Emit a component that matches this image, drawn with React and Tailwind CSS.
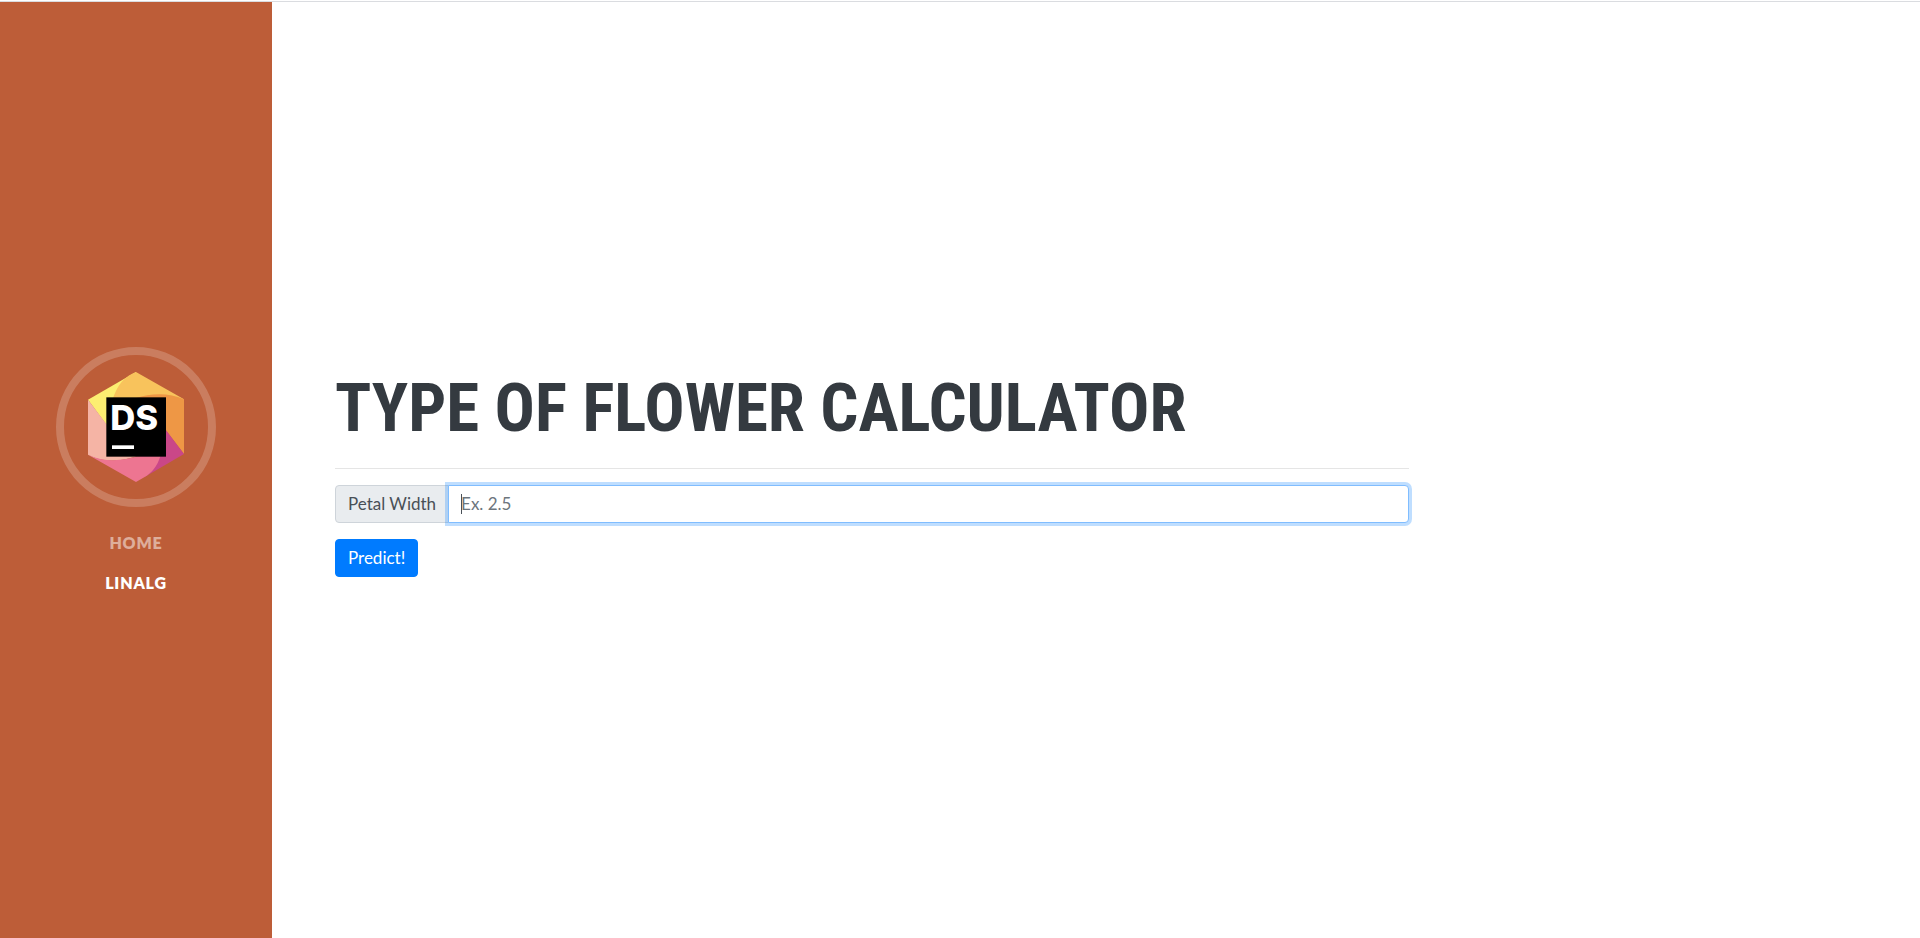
const links = [
  { label: "Home", active: false },
  { label: "LinAlg", active: true },
];

function Logo() {
  return (
    <svg viewBox="144 126 288 330" className="w-24" role="img" aria-label="DataSpell">
      <path d="M288 126 L144 209 L200 285 L290 240 Z" fill="#fcee71" />
      <path d="M144 209 L144 374 C190 400 250 395 300 375 L300 330 L199 282 Z" fill="#f5b4a5" />
      <path d="M288 126 L432 208 L377 280 L200 290 C212 225 222 150 288 126 Z" fill="#f8c35c" />
      <path d="M432 208 L432 372 L377 300 L288 204 C330 190 385 186 432 208 Z" fill="#ee9745" />
      <path d="M376 298 L432 372 L315 440 L300 370 Z" fill="#ca4788" />
      <path d="M144 374 C190 397 250 393 292 379 L361 379 C352 409 334 430 314 441 L288 456 Z" fill="#ed7591" />
      <rect x="199" y="202" width="179" height="178" fill="#000" />
      <text x="211" y="301" fill="#fff" fontFamily="Inter, sans-serif" fontWeight="800" fontSize="104">
        DS
      </text>
      <rect x="216" y="346" width="66" height="11" fill="#fff" />
    </svg>
  );
}

export default function App() {
  return (
    <div className="flex min-h-screen flex-col bg-white pt-px font-['Lato',sans-serif] text-[17px] leading-6">
      <div className="border-t border-[#dadce0]" />
      <div className="flex grow">
        <nav className="flex w-68 shrink-0 flex-col items-center justify-center bg-[#bd5d38] pt-[10px]">
          <a
            href="#top"
            className="mb-4 flex size-40 items-center justify-center rounded-full border-8 border-white/20"
          >
            <Logo />
          </a>
          <ul className="text-center text-base leading-6 font-extrabold uppercase">
            {links.map((link) => (
              <li key={link.label}>
                <a
                  href={`#${link.label.toLowerCase()}`}
                  className={
                    link.active
                      ? "block p-2 tracking-wider text-white"
                      : "block p-2 tracking-wider text-white/50"
                  }
                >
                  {link.label}
                </a>
              </li>
            ))}
          </ul>
        </nav>
        <main className="flex grow items-center px-[63px]">
          <section className="w-full max-w-[1074px]">
            <h1 className="font-['Liberation_Sans_Narrow','Roboto_Condensed',Roboto,sans-serif] text-[67px] leading-[88px] font-bold whitespace-nowrap text-[#343a40] uppercase">
              Type of Flower Calculator
            </h1>
            <hr className="my-4 border-black/10" />
            <form onSubmit={(event) => event.preventDefault()}>
              <div className="mb-4 flex">
                <label
                  htmlFor="petal-width"
                  className="-mr-px rounded-l border border-[#ced4da] bg-[#e9ecef] px-3 py-[6px] text-[#495057]"
                >
                  Petal Width
                </label>
                <div className="relative flex min-w-0 grow">
                  <input
                    id="petal-width"
                    type="text"
                    autoFocus
                    placeholder="Ex. 2.5"
                    className="peer w-full rounded-r border border-[#80bdff] bg-white px-3 py-[6px] text-[#495057] ring-3 ring-[#007bff]/25 outline-none placeholder:text-[#6c757d] placeholder-shown:caret-transparent"
                  />
                  <span className="pointer-events-none absolute inset-y-[9px] left-[13px] hidden w-px bg-[#495057] peer-placeholder-shown:block" />
                </div>
              </div>
              <button
                type="submit"
                className="rounded border border-[#007bff] bg-[#007bff] px-3 py-[6px] text-white"
              >
                Predict!
              </button>
            </form>
          </section>
        </main>
      </div>
    </div>
  );
}
